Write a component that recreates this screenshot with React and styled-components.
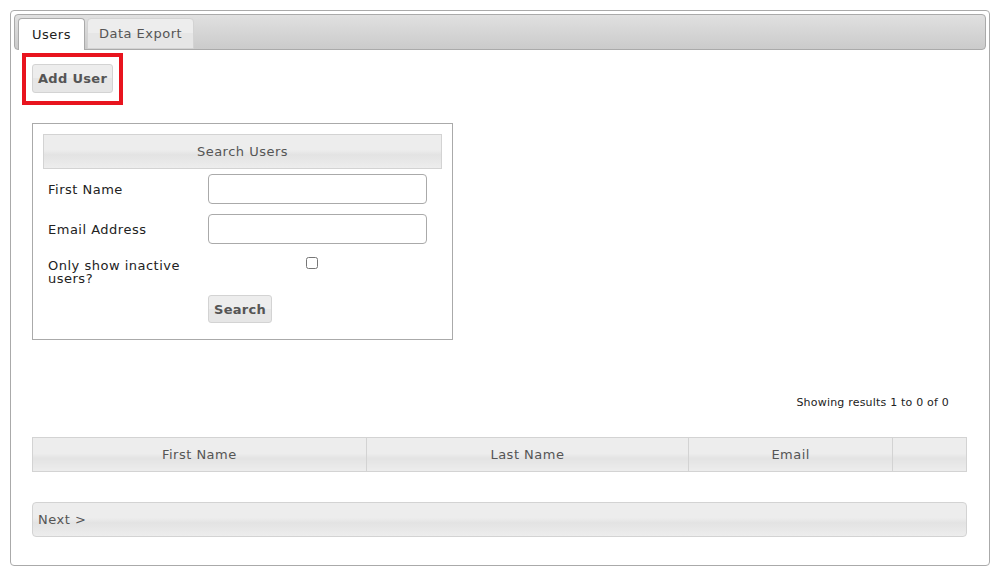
import React from 'react';
import styled, { createGlobalStyle } from 'styled-components';

const GlobalStyle = createGlobalStyle`
  body {
    margin: 0;
    background: #fff;
    font-family: "DejaVu Sans", Verdana, sans-serif;
    font-size: 13px;
    letter-spacing: 0.5px;
    color: #222;
  }
`;

const Tabs = styled.div`
  margin: 10px 12px 0 10px;
  height: 556px;
  box-sizing: border-box;
  border: 1px solid #aaa;
  border-radius: 4px;
  padding: 3px;
`;

const TabBar = styled.ul`
  list-style: none;
  margin: 0;
  padding: 3px 3px 0;
  height: 36px;
  box-sizing: border-box;
  display: flex;
  align-items: flex-end;
  gap: 2px;
  border: 1px solid #aaa;
  border-radius: 4px;
  background: linear-gradient(#e0e0e0, #cbcbcb);
`;

const Tab = styled.li`
  height: ${p => (p.$active ? '32px' : '31px')};
  box-sizing: border-box;
  margin-bottom: ${p => (p.$active ? '-1px' : '0')};
  padding: 0 ${p => (p.$active ? '13px' : '11px')};
  display: flex;
  align-items: center;
  border: 1px solid ${p => (p.$active ? '#aaa' : '#d3d3d3')};
  border-bottom: ${p => (p.$active ? 'none' : '1px solid #d3d3d3')};
  border-radius: 4px 4px 0 0;
  background: ${p => (p.$active ? '#fff' : 'linear-gradient(#ededed 50%, #e6e6e6 50%)')};
  color: ${p => (p.$active ? '#212121' : '#555')};
  font-size: 13px;
`;

const Panel = styled.div`
  padding: 0 19px 0 18px;
`;

const Highlight = styled.div`
  display: inline-block;
  margin: 3px 0 0 -10px;
  border: 4px solid #e8141e;
  padding: 7px 6px 8px 6px;
`;

const Button = styled.button`
  display: block;
  font-family: "DejaVu Sans", Verdana, sans-serif;
  font-size: 13px;
  letter-spacing: 0.3px;
  font-weight: bold;
  color: #555;
  height: ${p => (p.$small ? '28px' : '29px')};
  padding: 0 5px;
  border: 1px solid #d3d3d3;
  border-radius: 3px;
  background: linear-gradient(#ededed 50%, #e6e6e6 50%);
  cursor: pointer;
`;

const SearchBox = styled.fieldset`
  margin: 18px 0 0;
  width: 421px;
  box-sizing: border-box;
  border: 1px solid #aaa;
  padding: 10px 10px 16px 10px;
`;

const BoxHeader = styled.div`
  height: 35px;
  box-sizing: border-box;
  border: 1px solid #d3d3d3;
  background: linear-gradient(#ededed 45%, #e3e3e3 60%, #ededed);
  color: #555;
  display: flex;
  align-items: center;
  justify-content: center;
  margin-bottom: 5px;
`;

const FormGrid = styled.div`
  display: grid;
  grid-template-columns: 160px 219px;
  row-gap: 10px;
  padding-left: 5px;
  align-items: center;
`;

const Label = styled.label`
  font-size: 13px;
  color: #222;
  line-height: 13px;
  align-self: ${p => (p.$top ? 'start' : 'center')};
  padding-top: ${p => (p.$top ? '5px' : '0')};
`;

const Input = styled.input`
  height: 30px;
  box-sizing: border-box;
  border: 1px solid #aaa;
  border-radius: 4px;
`;

const CheckCell = styled.div`
  height: 38px;
  display: flex;
  justify-content: center;
  padding-right: 12px;
  align-items: flex-start;
  padding-top: 3px;
  box-sizing: border-box;
`;

const Check = styled.input`
  margin: 0;
  width: 12px;
  height: 12px;
`;

const ButtonCell = styled.div`
  grid-column: 2;
  margin-top: -7px;
`;

const ResultInfo = styled.div`
  text-align: right;
  font-size: 11px;
  letter-spacing: 0.2px;
  color: #222;
  margin: 56px 18px 0 0;
`;

const Table = styled.table`
  margin-top: 28px;
  width: 935px;
  border-collapse: collapse;
`;

const Th = styled.th`
  width: ${p => p.$w}px;
  height: 34px;
  box-sizing: border-box;
  padding: 0;
  border: 1px solid #d3d3d3;
  background: linear-gradient(#ededed 45%, #e3e3e3 60%, #ededed);
  color: #555;
  font-weight: normal;
  font-size: 13px;
`;

const Pager = styled.div`
  margin-top: 30px;
  height: 35px;
  box-sizing: border-box;
  border: 1px solid #d3d3d3;
  border-radius: 4px;
  background: linear-gradient(#ededed 45%, #e3e3e3 60%, #ededed);
  color: #555;
  display: flex;
  align-items: center;
  padding-left: 5px;
`;

const App = () => {
  return (
    <>
      <GlobalStyle />
      <Tabs>
        <TabBar>
          <Tab $active>Users</Tab>
          <Tab>Data Export</Tab>
        </TabBar>
        <Panel>
          <Highlight>
            <Button>Add User</Button>
          </Highlight>
          <SearchBox>
            <BoxHeader>Search Users</BoxHeader>
            <FormGrid>
              <Label>First Name</Label>
              <Input type="text" />
              <Label>Email Address</Label>
              <Input type="text" />
              <Label $top>Only show inactive users?</Label>
              <CheckCell>
                <Check type="checkbox" />
              </CheckCell>
              <ButtonCell>
                <Button $small>Search</Button>
              </ButtonCell>
            </FormGrid>
          </SearchBox>
          <ResultInfo>Showing results 1 to 0 of 0</ResultInfo>
          <Table>
            <thead>
              <tr>
                <Th $w={334}>First Name</Th>
                <Th $w={323}>Last Name</Th>
                <Th $w={204}>Email</Th>
                <Th $w={74}></Th>
              </tr>
            </thead>
          </Table>
          <Pager>Next &gt;</Pager>
        </Panel>
      </Tabs>
    </>
  );
};

export default App;
